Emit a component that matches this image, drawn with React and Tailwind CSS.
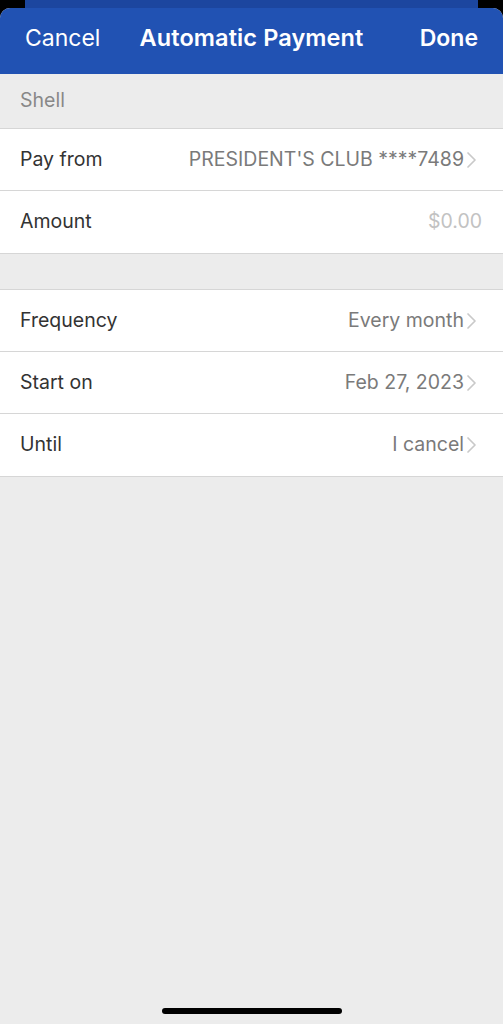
import React from 'react';

const Chevron = () => (
    <svg width="11" height="18" viewBox="0 0 11 18" className="ml-[2px] shrink-0">
        <path d="M2 2 L9 9 L2 16" fill="none" stroke="#c9c9c9" strokeWidth="1.7" strokeLinecap="round" strokeLinejoin="round" />
    </svg>
);

const Row = ({ label, value, muted, chevron = true, last }) => (
    <div className={`flex items-center justify-between h-[62px] pl-5 pr-[26px] bg-white ${last ? '' : 'border-b border-[#d6d6d6]'}`}>
        <span className="text-[19.5px] text-[#333333]">{label}</span>
        <span className="flex items-center">
            <span className={`text-[19.5px] ${muted ? 'text-[#c2c2c2] mr-[-5px]' : 'text-[#7a7a7a]'}`}>{value}</span>
            {chevron && <Chevron />}
        </span>
    </div>
);

export default function App() {
    return (
        <div className="w-[503px] h-[1024px] bg-black flex flex-col font-['Inter','Liberation_Sans',sans-serif] overflow-hidden">
            {/* stacked sheet behind */}
            <div className="mx-[25px] h-[8px] bg-[#1c469f] shrink-0" />

            {/* Sheet */}
            <div className="flex-1 flex flex-col bg-[#ececec] rounded-t-[10px] overflow-hidden">
                {/* Header */}
                <div className="h-[66px] bg-[#2152b3] flex items-center px-[25px] pb-[6px] shrink-0">
                    <span className="flex-1 text-[23px] text-white">Cancel</span>
                    <span className="text-[23.5px] font-semibold text-white tracking-[0.1px]">Automatic Payment</span>
                    <span className="flex-1 text-right text-[23px] font-semibold text-white">Done</span>
                </div>

                {/* Payee */}
                <div className="h-[55px] flex items-center pl-5 border-b border-[#d6d6d6] text-[19.5px] text-[#888888]">
                    Shell
                </div>

                <Row label="Pay from" value="PRESIDENT'S CLUB ****7489" />
                <Row label="Amount" value="$0.00" muted chevron={false} last />
                <div className="border-t border-[#d6d6d6]" />

                <div className="h-[35px]" />

                <div className="border-t border-[#d6d6d6]" />
                <Row label="Frequency" value="Every month" />
                <Row label="Start on" value="Feb 27, 2023" />
                <Row label="Until" value="I cancel" last />
                <div className="border-t border-[#d6d6d6]" />

                <div className="flex-1" />

                {/* Home indicator */}
                <div className="flex justify-center pb-[10px]">
                    <div className="w-[180px] h-[6px] rounded-full bg-black" />
                </div>
            </div>
        </div>
    );
}
